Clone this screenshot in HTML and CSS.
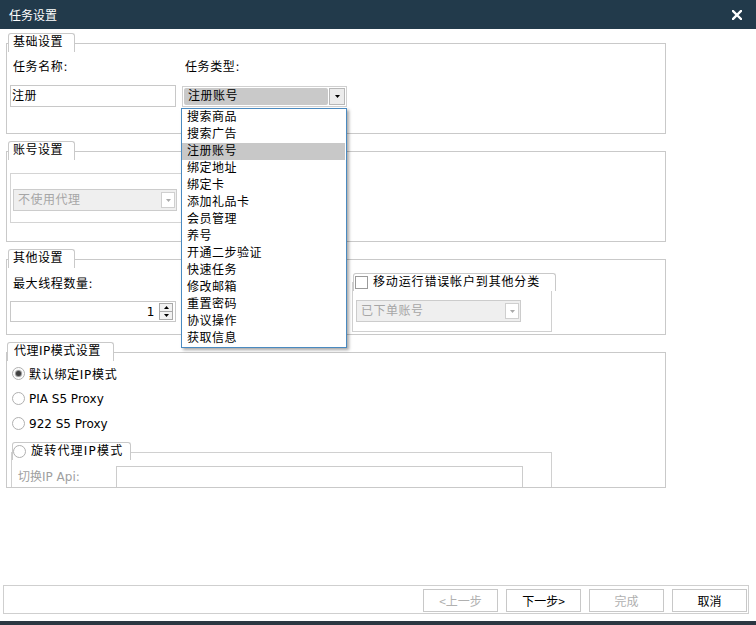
FILE: index.html
```html
<!DOCTYPE html>
<html lang="zh">
<head>
<meta charset="utf-8">
<title>任务设置</title>
<link rel="stylesheet" href="styles.css">
</head>
<body>
<div class="window">
  <div class="titlebar">
    <span class="title">任务设置</span>
    <svg class="close" width="10" height="10" viewBox="0 0 10 10"><path d="M1 1L9 9M9 1L1 9" stroke="#fff" stroke-width="2.4" stroke-linecap="square"/></svg>
  </div>

  <div class="content">
    <section class="group">
      <div class="legend">基础设置</div>
      <div class="box b1">
        <div class="field w166">
          <div class="label">任务名称:</div>
          <div class="input">注册</div>
        </div>
        <div class="field w165">
          <div class="label">任务类型:</div>
          <div class="combo active">
            <div class="sel">注册账号</div>
            <div class="arrow"><svg width="5" height="3" viewBox="0 0 5 3"><path d="M0 0H5L2.5 3Z" fill="#000"/></svg></div>
            <ul class="dropdown">
              <li>搜索商品</li>
              <li>搜索广告</li>
              <li class="hl">注册账号</li>
              <li>绑定地址</li>
              <li>绑定卡</li>
              <li>添加礼品卡</li>
              <li>会员管理</li>
              <li>养号</li>
              <li>开通二步验证</li>
              <li>快速任务</li>
              <li>修改邮箱</li>
              <li>重置密码</li>
              <li>协议操作</li>
              <li>获取信息</li>
            </ul>
          </div>
        </div>
      </div>
    </section>

    <section class="group">
      <div class="legend">账号设置</div>
      <div class="box b2">
        <div class="innerbox">
          <div class="combo disabled w164">
            <div class="sel">不使用代理</div>
            <div class="arrow"><svg width="5" height="3" viewBox="0 0 5 3"><path d="M0 0H5L2.5 3Z" fill="#aaa"/></svg></div>
          </div>
        </div>
      </div>
    </section>

    <section class="group">
      <div class="legend">其他设置</div>
      <div class="box b3">
        <div class="field w166 col1">
          <div class="label">最大线程数量:</div>
          <div class="input spin">
            <span class="num">1</span>
            <div class="spinbtns">
              <div class="sb"><svg width="5" height="3" viewBox="0 0 5 3"><path d="M0 3H5L2.5 0Z" fill="#000"/></svg></div>
              <div class="sb"><svg width="5" height="3" viewBox="0 0 5 3"><path d="M0 0H5L2.5 3Z" fill="#000"/></svg></div>
            </div>
          </div>
        </div>
        <div class="col2">
          <div class="legend chk"><span class="checkbox"></span><span>移动运行错误帐户到其他分类</span></div>
          <div class="subbox">
            <div class="combo disabled w165">
              <div class="sel">已下单账号</div>
              <div class="arrow"><svg width="5" height="3" viewBox="0 0 5 3"><path d="M0 0H5L2.5 3Z" fill="#aaa"/></svg></div>
            </div>
          </div>
        </div>
      </div>
    </section>

    <section class="group">
      <div class="legend wide">代理IP模式设置</div>
      <div class="box b4">
        <div class="radiorow cjk"><span class="radio checked"></span><span>默认绑定IP模式</span></div>
        <div class="radiorow"><span class="radio"></span><span>PIA S5 Proxy</span></div>
        <div class="radiorow"><span class="radio"></span><span>922 S5 Proxy</span></div>
        <div class="rotgroup">
          <div class="legend rad"><span class="radio"></span><span>旋转代理IP模式</span></div>
          <div class="rotbox">
            <span class="apilabel">切换IP Api:</span>
            <div class="apiinput"></div>
          </div>
        </div>
      </div>
    </section>
  </div>

  <div class="footer">
    <div class="btn dis">&lt;上一步</div>
    <div class="btn">下一步&gt;</div>
    <div class="btn dis">完成</div>
    <div class="btn">取消</div>
  </div>
  <div class="bottomline"></div>
</div>
</body>
</html>
```

FILE: styles.css
```css
* { box-sizing: border-box; }
html, body { margin: 0; padding: 0; background: #fff; }
body {
  font-family: "DejaVu Sans", "Noto Sans CJK SC", sans-serif;
  font-size: 12px;
  color: #000;
}
.window {
  height: 625px;
  display: flex;
  flex-direction: column;
  overflow: hidden;
}
.titlebar {
  flex: none;
  height: 29px;
  background: #223a4b;
  color: #fff;
  display: flex;
  align-items: center;
  justify-content: space-between;
  padding: 0 14px 0 9px;
}
.title { font-family: "Noto Sans CJK SC", sans-serif; font-size: 12px; line-height: 16px; }
.close { display: block; margin-top: 1px; }

.content {
  padding: 4px 0 0 6px;
  letter-spacing: 0.5px;
}
.group { display: flex; flex-direction: column; align-items: flex-start; margin-top: 7px; }
.group:first-child { margin-top: 0; }

.legend {
  position: relative;
  z-index: 1;
  height: 19px;
  margin-left: 2px;
  border: 1px solid #c9c9c9;
  border-bottom: none;
  border-radius: 3px 3px 0 0;
  background: #fff;
  padding: 0 11px 0 4px;
  line-height: 17px;
  white-space: nowrap;
}
.legend.wide { margin-left: 1px; padding: 0 12px 0 6px; }
.box {
  margin-top: -9px;
  width: 660px;
  border: 1px solid #c9c9c9;
}

.b1 { height: 91px; display: flex; gap: 6px; padding: 15px 0 0 3px; }
.field { display: flex; flex-direction: column; }
.w166 { width: 166px; }
.w165 { width: 165px; }
.w164 { width: 164px; }
.label { height: 17px; line-height: 17px; padding-left: 3px; margin-bottom: 9px; white-space: nowrap; letter-spacing: 0.6px; }
.input {
  height: 22px;
  border: 1px solid #c8c8c8;
  line-height: 20px;
  padding-left: 1px;
}

.combo {
  position: relative;
  display: flex;
  height: 21px;
  border: 1px solid #d0d0d0;
  padding: 1px;
  gap: 1px;
}
.combo.active { margin-top: 1px; }
.combo .sel { flex: 1; line-height: 17px; padding-left: 4px; white-space: nowrap; }
.combo.active .sel { background: #c9c9c9; border-radius: 2px; }
.combo .arrow {
  width: 16px;
  display: flex;
  align-items: center;
  justify-content: center;
  border: 1px solid #b8b8b8;
  background: #ececec;
}
.combo .arrow svg { display: block; }
.combo.disabled {
  height: 22px;
  background: #efefef;
  border-color: #cccccc;
  color: #a6a6a6;
  padding: 2px 1px 2px 1px;
}
.combo.disabled .sel { line-height: 16px; padding-left: 3px; }
.combo.disabled .arrow { width: 14px; background: #fff; border-color: #cfcfcf; }

.dropdown {
  position: absolute;
  z-index: 10;
  left: -2px;
  top: 21px;
  width: 166px;
  height: 240px;
  margin: 0;
  padding: 0;
  list-style: none;
  background: #fff;
  border: 1px solid #4a8ac0;
  box-shadow: 2px 2px 3px rgba(0, 0, 0, 0.35);
}
.dropdown li { height: 17px; line-height: 17px; padding-left: 5px; white-space: nowrap; }
.dropdown li.hl { background: #c8c8c8; margin-right: 1px; }

.b2 { height: 91px; padding: 21px 0 0 3px; }
.innerbox { width: 320px; height: 50px; border: 1px solid #d4d4d4; padding: 15px 0 0 2px; }

.b3 { height: 76px; display: flex; align-items: flex-start; padding-left: 3px; }
.col1 { margin-top: 16px; }
.col1 .label { margin-bottom: 8px; }
.spin {
  height: 21px;
  display: flex;
  justify-content: flex-end;
  align-items: center;
  padding-right: 2px;
}
.num { font-family: "DejaVu Sans", sans-serif; font-size: 12px; margin-right: 4px; }
.spinbtns { display: flex; flex-direction: column; width: 14px; height: 17px; }
.sb {
  flex: 1;
  display: flex;
  align-items: center;
  justify-content: center;
  border: 1px solid #a9a9a9;
  background: #f2f2f2;
}
.sb + .sb { border-top: none; }
.sb svg { display: block; }

.col2 { margin-left: 176px; margin-top: 13px; display: flex; flex-direction: column; align-items: flex-start; }
.legend.chk, .legend.rad {
  height: 18px;
  margin-left: 1px;
  display: flex;
  align-items: center;
  padding: 0 15px 0 1px;
  gap: 5px;
}
.legend.chk { letter-spacing: 0.85px; }
.checkbox {
  width: 13px;
  height: 13px;
  border: 1px solid #9a9a9a;
  background: #fff;
  flex: none;
}
.subbox {
  margin-top: -9px;
  width: 200px;
  height: 50px;
  border: 1px solid #d0d0d0;
  padding: 17px 0 0 3px;
}

.b4 { height: 136px; overflow: hidden; padding: 8px 0 0 5px; }
.radiorow { height: 25px; display: flex; align-items: center; gap: 4px; white-space: nowrap; letter-spacing: 0; }
.radiorow.cjk { letter-spacing: 0.7px; }
.radio {
  position: relative;
  width: 13px;
  height: 13px;
  border-radius: 50%;
  border: 1px solid #b0b0b0;
  background: #fff;
  flex: none;
}
.radio.checked::after {
  content: "";
  position: absolute;
  left: 3px;
  top: 3px;
  width: 5px;
  height: 5px;
  border-radius: 50%;
  background: #404040;
  box-shadow: 0 0 1px 1px #8a8a8a;
}
.rotgroup { margin-top: 6px; margin-left: -1px; display: flex; flex-direction: column; align-items: flex-start; }
.legend.rad { padding: 0 7px 0 0; margin-left: 1px; letter-spacing: 1.2px; }
.rotbox {
  margin-top: -8px;
  width: 541px;
  height: 60px;
  border: 1px solid #d0d0d0;
  padding: 13px 0 0 6px;
  display: flex;
  align-items: flex-start;
}
.apilabel { width: 98px; line-height: 22px; color: #a0a0a0; white-space: nowrap; letter-spacing: 0; }
.apiinput { width: 407px; height: 24px; border: 1px solid #cccccc; }

.footer {
  flex: none;
  margin-top: auto;
  margin-left: 3px;
  width: 746px;
  height: 29px;
  border: 1px solid #cfcfcf;
  display: flex;
  justify-content: flex-end;
  gap: 8px;
  padding: 3px 1px 0 0;
}
.btn {
  width: 75px;
  height: 23px;
  border: 1px solid #c8c8c8;
  background: #fff;
  text-align: center;
  line-height: 21px;
  font-family: "Noto Sans CJK SC", sans-serif;
}
.btn.dis { color: #b0b0b0; }
.bottomline { flex: none; margin-top: 7px; height: 4px; background: #2b3742; }
```
